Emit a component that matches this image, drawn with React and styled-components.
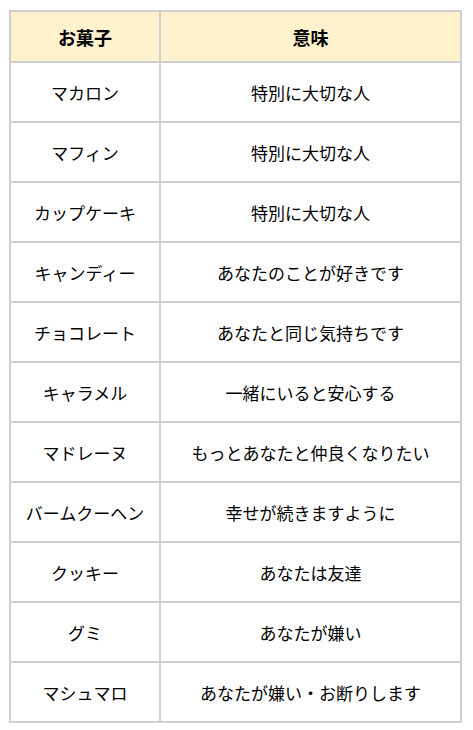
import React from "react";
import styled, { createGlobalStyle } from "styled-components";

const rows = [
  ["マカロン", "特別に大切な人"],
  ["マフィン", "特別に大切な人"],
  ["カップケーキ", "特別に大切な人"],
  ["キャンディー", "あなたのことが好きです"],
  ["チョコレート", "あなたと同じ気持ちです"],
  ["キャラメル", "一緒にいると安心する"],
  ["マドレーヌ", "もっとあなたと仲良くなりたい"],
  ["バームクーヘン", "幸せが続きますように"],
  ["クッキー", "あなたは友達"],
  ["グミ", "あなたが嫌い"],
  ["マシュマロ", "あなたが嫌い・お断りします"],
];

const Global = createGlobalStyle`
  body {
    margin: 0;
    background: #fff;
    font-family: "Noto Sans CJK JP", "Noto Sans", sans-serif;
    color: #000;
  }
`;

const Wrap = styled.div`
  padding: 10px 0 0 9px;
`;

const Table = styled.table`
  width: 453px;
  border-collapse: collapse;
  border: 2px solid #cfcfcf;
`;

const HeadCell = styled.th`
  height: 49px;
  background-color: #fff2cc;
  border: 2px solid #cfcfcf;
  font-size: 18px;
  font-weight: 700;
  text-align: center;
  padding: 0;
  width: ${(p) => p.$w || "auto"};
`;

const Cell = styled.td`
  height: 58px;
  border: 2px solid #cfcfcf;
  font-size: 17px;
  font-weight: 400;
  text-align: center;
  padding: 0;
  white-space: nowrap;
`;

const App = () => {
  return (
    <Wrap>
      <Global />
      <Table>
        <thead>
          <tr>
            <HeadCell $w="148px">お菓子</HeadCell>
            <HeadCell>意味</HeadCell>
          </tr>
        </thead>
        <tbody>
          {rows.map(([name, meaning]) => (
            <tr key={name}>
              <Cell>{name}</Cell>
              <Cell>{meaning}</Cell>
            </tr>
          ))}
        </tbody>
      </Table>
    </Wrap>
  );
};

export default App;
